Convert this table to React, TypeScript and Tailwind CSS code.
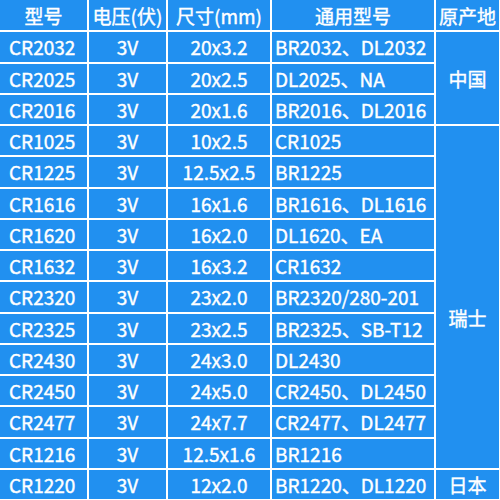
import React from 'react';

const rows = [
  { model: 'CR2032', volt: '3V', size: '20x3.2', alt: 'BR2032、DL2032' },
  { model: 'CR2025', volt: '3V', size: '20x2.5', alt: 'DL2025、NA' },
  { model: 'CR2016', volt: '3V', size: '20x1.6', alt: 'BR2016、DL2016' },
  { model: 'CR1025', volt: '3V', size: '10x2.5', alt: 'CR1025' },
  { model: 'CR1225', volt: '3V', size: '12.5x2.5', alt: 'BR1225' },
  { model: 'CR1616', volt: '3V', size: '16x1.6', alt: 'BR1616、DL1616' },
  { model: 'CR1620', volt: '3V', size: '16x2.0', alt: 'DL1620、EA' },
  { model: 'CR1632', volt: '3V', size: '16x3.2', alt: 'CR1632' },
  { model: 'CR2320', volt: '3V', size: '23x2.0', alt: 'BR2320/280-201' },
  { model: 'CR2325', volt: '3V', size: '23x2.5', alt: 'BR2325、SB-T12' },
  { model: 'CR2430', volt: '3V', size: '24x3.0', alt: 'DL2430' },
  { model: 'CR2450', volt: '3V', size: '24x5.0', alt: 'CR2450、DL2450' },
  { model: 'CR2477', volt: '3V', size: '24x7.7', alt: 'CR2477、DL2477' },
  { model: 'CR1216', volt: '3V', size: '12.5x1.6', alt: 'BR1216' },
  { model: 'CR1220', volt: '3V', size: '12x2.0', alt: 'BR1220、DL1220' },
];

// origin cells with their row span, keyed by first row index
const origins: Record<number, { label: string; span: number; pad: string }> = {
  0: { label: '中国', span: 3, pad: '' },
  3: { label: '瑞士', span: 11, pad: 'pt-[42px]' },
  14: { label: '日本', span: 1, pad: '' },
};

export default function App() {
  const cell = 'border-white border-r-2 border-b-2 p-0';
  return (
    <div className="w-[500px] h-[500px] overflow-hidden bg-[#2190f0]">
      <table
        className="w-[500px] h-[500px] table-fixed border-collapse text-white text-[19px] font-normal leading-none [-webkit-text-stroke:0.4px_white]"
        style={{ fontFamily: '"Noto Sans CJK SC", "Noto Sans", sans-serif' }}
      >
        <colgroup>
          <col className="w-[88px]" />
          <col className="w-[79px]" />
          <col className="w-[104px]" />
          <col className="w-[164px]" />
          <col className="w-[65px]" />
        </colgroup>
        <thead>
          <tr className="h-[31.25px] text-[19px]">
            <th className={`${cell} font-normal text-center`}>型号</th>
            <th className={`${cell} font-normal text-center`}>电压(伏)</th>
            <th className={`${cell} font-normal text-center whitespace-nowrap`}>尺寸(mm)</th>
            <th className={`${cell} font-normal text-center`}>通用型号</th>
            <th className={`${cell} border-r-0 font-normal text-center whitespace-nowrap`}>原产地</th>
          </tr>
        </thead>
        <tbody>
          {rows.map((r, i) => {
            const last = i === rows.length - 1;
            const b = last ? 'border-b-0' : '';
            const o = origins[i];
            return (
              <tr key={r.model} className="h-[31.25px]">
                <td className={`${cell} ${b} pl-[9px] text-left`}>{r.model}</td>
                <td className={`${cell} ${b} text-center`}>{r.volt}</td>
                <td className={`${cell} ${b} text-center whitespace-nowrap`}>{r.size}</td>
                <td className={`${cell} ${b} pl-[3px] text-left whitespace-nowrap`}>{r.alt}</td>
                {o && (
                  <td
                    rowSpan={o.span}
                    className={`${cell} ${b} border-r-0 text-center ${o.pad}`}
                  >
                    {o.label}
                  </td>
                )}
              </tr>
            );
          })}
        </tbody>
      </table>
    </div>
  );
}
